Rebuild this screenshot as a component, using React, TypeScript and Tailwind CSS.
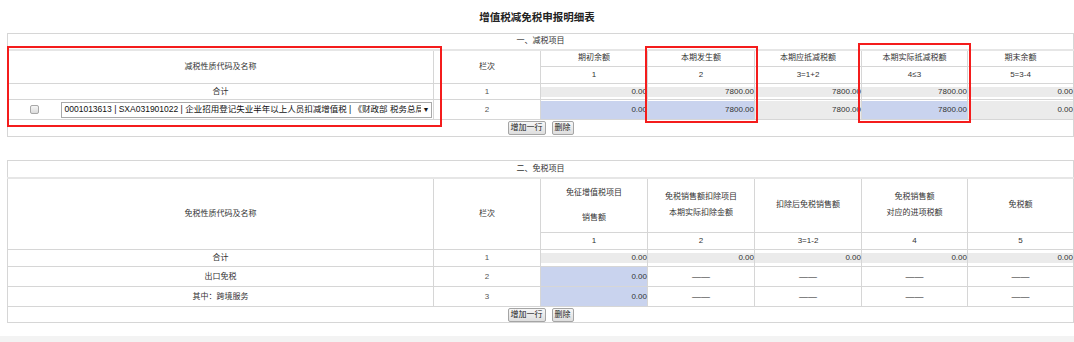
import React from "react";

const F = { fontFamily: '"Liberation Sans", "Noto Sans CJK SC", sans-serif' };

function Checkbox() {
  return (
    <span className="inline-block w-[9px] h-[9px] rounded-[2px] border border-[#a8a8a8] bg-gradient-to-b from-[#f6f6f6] to-[#dcdcdc] align-middle" />
  );
}

function Buttons() {
  return (
    <div className="flex justify-center gap-[6px]">
      <span className="inline-flex items-center h-[14px] px-[2px] text-[8px] leading-none text-[#222] border border-[#a5a5a5] rounded-[2px] bg-gradient-to-b from-[#f7f7f7] to-[#dedede]">
        增加一行
      </span>
      <span className="inline-flex items-center h-[14px] px-[2px] text-[8px] leading-none text-[#222] border border-[#a5a5a5] rounded-[2px] bg-gradient-to-b from-[#f7f7f7] to-[#dedede]">
        删除
      </span>
    </div>
  );
}

const td = "border border-[#d6d6d6] p-0 text-center align-middle";
const dash = "border border-[#d6d6d6] p-0 text-center align-middle text-[9px] text-[#222]";

function GrayVal({ v }: { v: string }) {
  return (
    <div className="h-[10px] bg-[#ebebeb] text-right text-[8px] leading-[10px] text-[#333]">{v}</div>
  );
}

function FillVal({ v, blue }: { v: string; blue?: boolean }) {
  return (
    <div
      className={
        blue
          ? "h-[18px] bg-[#c9d3ee] text-right text-[8px] leading-[18px] text-[#333]"
          : "h-[18px] bg-[#ebebeb] text-right text-[8px] leading-[18px] text-[#333]"
      }
    >
      {v}
    </div>
  );
}

function Cols() {
  return (
    <colgroup>
      <col className="w-[53px]" />
      <col className="w-[373px]" />
      <col className="w-[107px]" />
      <col className="w-[107px]" />
      <col className="w-[107px]" />
      <col className="w-[107px]" />
      <col className="w-[106px]" />
      <col className="w-[106px]" />
    </colgroup>
  );
}

export default function App() {
  return (
    <div style={F} className="relative w-[1074px] h-[342px] bg-[#f3f3f3] overflow-hidden text-[#333]">
      <div className="bg-white h-[336px] pt-[10px]">
        <div className="text-center text-[10.5px] font-bold leading-[14px] text-[#222] h-[23px]">
          增值税减免税申报明细表
        </div>

        {/* Table 1 */}
        <table className="ml-[7px] w-[1066px] table-fixed border-collapse text-[8px] leading-[10px]">
          <Cols />
          <tbody>
            <tr className="h-[16px]">
              <td colSpan={8} className="border border-[#d6d6d6] border-b-[2px] border-b-[#e6e6e6] p-0 text-center">
                一、减税项目
              </td>
            </tr>
            <tr className="h-[17px]">
              <td colSpan={2} rowSpan={2} className={td}>减税性质代码及名称</td>
              <td rowSpan={2} className={td}>栏次</td>
              <td className={td}>期初余额</td>
              <td className={td}>本期发生额</td>
              <td className={td}>本期应抵减税额</td>
              <td className={td}>本期实际抵减税额</td>
              <td className={td}>期末余额</td>
            </tr>
            <tr className="h-[17px]">
              <td className={td}>1</td>
              <td className={td}>2</td>
              <td className={td}>3=1+2</td>
              <td className={td}>4≤3</td>
              <td className={td}>5=3-4</td>
            </tr>
            <tr className="h-[16px]">
              <td colSpan={2} className={td}>合计</td>
              <td className={td + " text-[#555]"}>1</td>
              <td className={td}><GrayVal v="0.00" /></td>
              <td className={td}><GrayVal v="7800.00" /></td>
              <td className={td}><GrayVal v="7800.00" /></td>
              <td className={td}><GrayVal v="7800.00" /></td>
              <td className={td}><GrayVal v="0.00" /></td>
            </tr>
            <tr className="h-[20px]">
              <td className="border border-[#d6d6d6] border-r-0 p-0 text-center align-middle">
                <Checkbox />
              </td>
              <td className="border border-[#d6d6d6] border-l-0 p-0 align-middle pr-[1px]">
                <div className="flex items-center h-[16px] border border-[#a9a9a9] bg-white text-[8.5px] text-[#111] leading-none">
                  <span className="flex-1 min-w-0 overflow-hidden whitespace-nowrap pl-[3px]">
                    0001013613 | SXA031901022 | 企业招用登记失业半年以上人员扣减增值税 | 《财政部 税务总局
                  </span>
                  <span className="w-[10px] shrink-0 text-[7px] text-center text-[#111]">▼</span>
                </div>
              </td>
              <td className={td + " text-[#555]"}>2</td>
              <td className={td}><FillVal v="0.00" blue /></td>
              <td className={td}><FillVal v="7800.00" blue /></td>
              <td className={td}><FillVal v="7800.00" /></td>
              <td className={td}><FillVal v="7800.00" blue /></td>
              <td className={td}><FillVal v="0.00" /></td>
            </tr>
            <tr className="h-[17px]">
              <td colSpan={8} className={td}><Buttons /></td>
            </tr>
          </tbody>
        </table>

        <div className="h-[23px]" />

        {/* Table 2 */}
        <table className="ml-[7px] w-[1066px] table-fixed border-collapse text-[8px] leading-[10px]">
          <Cols />
          <tbody>
            <tr className="h-[17px]">
              <td colSpan={8} className="border border-[#d6d6d6] border-b-[2px] border-b-[#e6e6e6] p-0 text-center">
                二、免税项目
              </td>
            </tr>
            <tr className="h-[55px]">
              <td colSpan={2} rowSpan={2} className={td}>免税性质代码及名称</td>
              <td rowSpan={2} className={td}>栏次</td>
              <td className={td}>
                <div>免征增值税项目</div>
                <div className="mt-[15px]">销售额</div>
              </td>
              <td className={td}>
                <div>免税销售额扣除项目</div>
                <div className="mt-[6px]">本期实际扣除金额</div>
              </td>
              <td className={td}>扣除后免税销售额</td>
              <td className={td}>
                <div>免税销售额</div>
                <div className="mt-[6px]">对应的进项税额</div>
              </td>
              <td className={td}>免税额</td>
            </tr>
            <tr className="h-[17px]">
              <td className={td}>1</td>
              <td className={td}>2</td>
              <td className={td}>3=1-2</td>
              <td className={td}>4</td>
              <td className={td}>5</td>
            </tr>
            <tr className="h-[17px]">
              <td colSpan={2} className={td}>合计</td>
              <td className={td + " text-[#555]"}>1</td>
              <td className={td}><GrayVal v="0.00" /></td>
              <td className={td}><GrayVal v="0.00" /></td>
              <td className={td}><GrayVal v="0.00" /></td>
              <td className={td}><GrayVal v="0.00" /></td>
              <td className={td}><GrayVal v="0.00" /></td>
            </tr>
            <tr className="h-[20px]">
              <td colSpan={2} className={td}>出口免税</td>
              <td className={td + " text-[#555]"}>2</td>
              <td className="border border-[#d6d6d6] p-0 bg-[#c9d3ee] text-right align-middle">0.00</td>
              <td className={dash}>——</td>
              <td className={dash}>——</td>
              <td className={dash}>——</td>
              <td className={dash}>——</td>
            </tr>
            <tr className="h-[20px]">
              <td colSpan={2} className={td}>其中：跨境服务</td>
              <td className={td + " text-[#555]"}>3</td>
              <td className="border border-[#d6d6d6] p-0 bg-[#c9d3ee] text-right align-middle">0.00</td>
              <td className={dash}>——</td>
              <td className={dash}>——</td>
              <td className={dash}>——</td>
              <td className={dash}>——</td>
            </tr>
            <tr className="h-[16px]">
              <td colSpan={8} className={td}><Buttons /></td>
            </tr>
          </tbody>
        </table>
      </div>

      {/* red annotation boxes */}
      <div className="absolute left-[7px] top-[46px] w-[435px] h-[81px] border-2 border-[#f41c1c] pointer-events-none" />
      <div className="absolute left-[645px] top-[46px] w-[113px] h-[77px] border-2 border-[#f41c1c] pointer-events-none" />
      <div className="absolute left-[858px] top-[43px] w-[113px] h-[80px] border-2 border-[#f41c1c] pointer-events-none" />
    </div>
  );
}
